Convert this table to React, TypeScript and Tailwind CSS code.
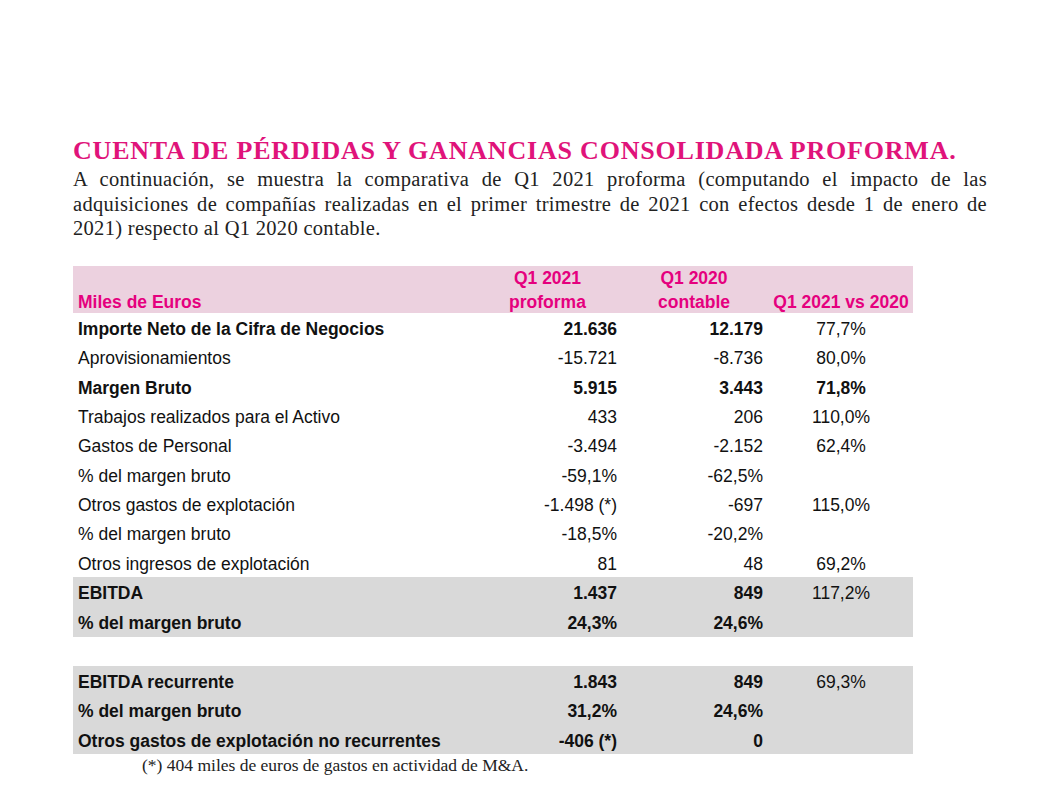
import React from "react";

type Row = {
  label: string;
  v1: string;
  v2: string;
  v3: string;
  bold?: boolean;
  boldPct?: boolean;
  gray?: boolean;
  tall?: boolean;
};

const group1: Row[] = [
  { label: "Importe Neto de la Cifra de Negocios", v1: "21.636", v2: "12.179", v3: "77,7%", bold: true },
  { label: "Aprovisionamientos", v1: "-15.721", v2: "-8.736", v3: "80,0%" },
  { label: "Margen Bruto", v1: "5.915", v2: "3.443", v3: "71,8%", bold: true, boldPct: true },
  { label: "Trabajos realizados para el Activo", v1: "433", v2: "206", v3: "110,0%" },
  { label: "Gastos de Personal", v1: "-3.494", v2: "-2.152", v3: "62,4%" },
  { label: "% del margen bruto", v1: "-59,1%", v2: "-62,5%", v3: "" },
  { label: "Otros gastos de explotación", v1: "-1.498 (*)", v2: "-697", v3: "115,0%" },
  { label: "% del margen bruto", v1: "-18,5%", v2: "-20,2%", v3: "" },
  { label: "Otros ingresos de explotación", v1: "81", v2: "48", v3: "69,2%" },
  { label: "EBITDA", v1: "1.437", v2: "849", v3: "117,2%", bold: true, gray: true, tall: true },
  { label: "% del margen bruto", v1: "24,3%", v2: "24,6%", v3: "", bold: true, gray: true, tall: true },
];

const group2: Row[] = [
  { label: "EBITDA recurrente", v1: "1.843", v2: "849", v3: "69,3%", bold: true, gray: true },
  { label: "% del margen bruto", v1: "31,2%", v2: "24,6%", v3: "", bold: true, gray: true },
  { label: "Otros gastos de explotación no recurrentes", v1: "-406 (*)", v2: "0", v3: "", bold: true, gray: true },
];

function TableRow({ r }: { r: Row }) {
  const b = r.bold ? "font-bold" : "font-normal";
  return (
    <div
      className={`grid grid-cols-[397px_155px_144px_144px] ${r.tall ? "h-[30px]" : "h-[29.33px]"} ${
        r.gray ? "bg-[#d9d9d9]" : ""
      } pt-[3px] leading-[26.33px] text-[#111] whitespace-nowrap`}
    >
      <div className={`pl-[5px] ${b}`}>{r.label}</div>
      <div className={`text-right pr-[8px] ${b}`}>{r.v1}</div>
      <div className={`text-right pr-[6px] ${b}`}>{r.v2}</div>
      <div className={`text-center ${r.boldPct ? "font-bold" : "font-normal"}`}>{r.v3}</div>
    </div>
  );
}

export default function App() {
  return (
    <div className="w-[1040px] h-[800px] bg-white overflow-hidden">
      <div className="pl-[73px] pt-[140px]">
        <div
          className="h-[22px] leading-[22px] text-[26px] tracking-[0.8px] font-bold text-[#e0137a] whitespace-nowrap"
          style={{ fontFamily: '"Liberation Serif", "Times New Roman", serif' }}
        >
          CUENTA DE PÉRDIDAS Y GANANCIAS CONSOLIDADA PROFORMA.
        </div>
        <div
          className="mt-[5px] w-[914px] text-[20.5px] tracking-[0.3px] leading-[24.5px] text-[#222]"
          style={{ fontFamily: '"Liberation Serif", "Times New Roman", serif' }}
        >
          <div className="text-justify [text-align-last:justify] whitespace-nowrap">
            A continuación, se muestra la comparativa de Q1 2021 proforma (computando el impacto de las
          </div>
          <div className="text-justify [text-align-last:justify] whitespace-nowrap">
            adquisiciones de compañías realizadas en el primer trimestre de 2021 con efectos desde 1 de enero de
          </div>
          <div>2021) respecto al Q1 2020 contable.</div>
        </div>

        <div
          className="mt-[25.5px] w-[840px] text-[17.5px]"
          style={{ fontFamily: '"Liberation Sans", Arial, sans-serif' }}
        >
          <div className="grid grid-cols-[397px_155px_144px_144px] h-[47px] bg-[#ecd1df] text-[#e5007e] font-bold leading-[24px] items-end whitespace-nowrap">
            <div className="pl-[5px]">Miles de Euros</div>
            <div className="text-center">
              <div>Q1 2021</div>
              <div>proforma</div>
            </div>
            <div className="text-center pr-[6px]">
              <div>Q1 2020</div>
              <div>contable</div>
            </div>
            <div className="text-center">Q1 2021 vs 2020</div>
          </div>
          {group1.map((r, i) => (
            <TableRow key={i} r={r} />
          ))}
          <div className="h-[29px]" />
          {group2.map((r, i) => (
            <TableRow key={i} r={r} />
          ))}
        </div>
        <div
          className="pl-[69px] text-[17.5px] leading-[22px] text-[#222]"
          style={{ fontFamily: '"Liberation Serif", "Times New Roman", serif' }}
        >
          (*) 404 miles de euros de gastos en actividad de M&amp;A.
        </div>
      </div>
    </div>
  );
}
